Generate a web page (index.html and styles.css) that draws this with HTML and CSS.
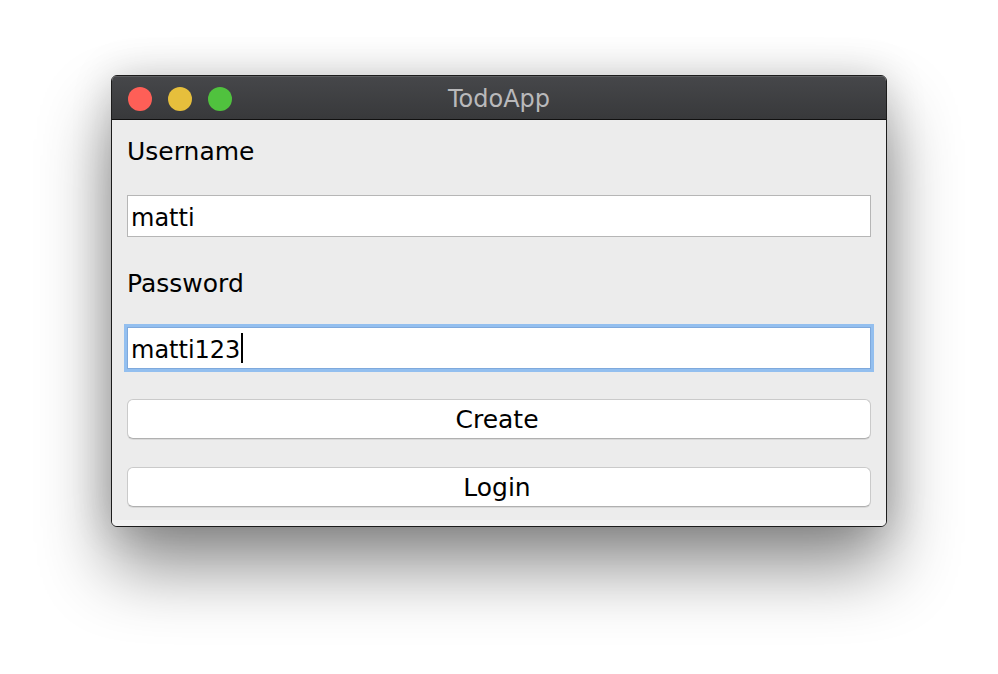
FILE: index.html
```html
<!DOCTYPE html>
<html>
<head>
<meta charset="utf-8">
<title>TodoApp</title>
<link rel="stylesheet" href="styles.css">
</head>
<body>
<div class="stage">
  <div class="window">
    <div class="titlebar">
      <div class="lights">
        <span class="light red"></span>
        <span class="light yellow"></span>
        <span class="light green"></span>
      </div>
      <div class="title">TodoApp</div>
    </div>
    <div class="content">
      <div class="label">Username</div>
      <div class="field">matti</div>
      <div class="label">Password</div>
      <div class="field focused">matti123<span class="caret"></span></div>
      <div class="button create">Create</div>
      <div class="button login">Login</div>
    </div>
    <div class="footer"></div>
  </div>
</div>
</body>
</html>
```

FILE: styles.css
```css
html, body {
  margin: 0;
  padding: 0;
  background: #ffffff;
}

.stage {
  width: 998px;
  height: 674px;
  padding: 75px 0 0 111px;
  box-sizing: border-box;
  overflow: hidden;
}

.window {
  width: 776px;
  height: 452px;
  box-sizing: border-box;
  border: 1px solid #1c1c1c;
  border-radius: 6px;
  background: #ececec;
  overflow: hidden;
  display: flex;
  flex-direction: column;
  box-shadow: 0 40px 70px rgba(0, 0, 0, 0.45), 0 0 40px rgba(0, 0, 0, 0.16);
  font-family: "DejaVu Sans", sans-serif;
  color: #000;
}

.titlebar {
  position: relative;
  height: 43px;
  flex: none;
  background: linear-gradient(#46474a, #38393b);
  border-bottom: 1px solid #101010;
  box-shadow: inset 0 1px 0 #5e5f61;
  display: flex;
  align-items: center;
  justify-content: center;
}

.lights {
  position: absolute;
  left: 16px;
  top: 11px;
  display: flex;
  gap: 16px;
}

.light {
  width: 24px;
  height: 24px;
  border-radius: 50%;
  display: block;
}

.red { background: #fe5f57; }
.yellow { background: #e6bf3c; }
.green { background: #50c23e; }

.title {
  font-size: 24px;
  color: #b9b9bb;
  line-height: 43px;
  padding-top: 3px;
}

.content {
  flex: 1;
  padding: 15px 15px 0 15px;
  display: flex;
  flex-direction: column;
  gap: 30px;
}

.label {
  font-size: 25px;
  height: 30px;
  box-sizing: border-box;
  padding-top: 4px;
  line-height: 26px;
}

.field {
  height: 42px;
  box-sizing: border-box;
  border: 1px solid #b6b6b6;
  background: #ffffff;
  font-size: 24px;
  line-height: 36px;
  padding: 3px 0 0 3px;
  display: flex;
  align-items: center;
}

.field.focused {
  border-color: #7fa9dc;
  box-shadow: 0 0 0 3px #93bfef;
}

.caret {
  display: inline-block;
  width: 2px;
  height: 30px;
  background: #000;
  margin-left: 1px;
  margin-top: -3px;
}

.button {
  height: 40px;
  box-sizing: border-box;
  border: 1px solid #cacaca;
  border-bottom-color: #b0b0b0;
  border-radius: 6px;
  background: #ffffff;
  box-shadow: 0 1px 0 rgba(0, 0, 0, 0.08);
  font-size: 25px;
  line-height: 40px;
  text-align: center;
  padding-right: 4px;
}

.button.login {
  margin-top: -2px;
}

.footer {
  height: 6px;
  flex: none;
  background: #f2f2f2;
}
```
